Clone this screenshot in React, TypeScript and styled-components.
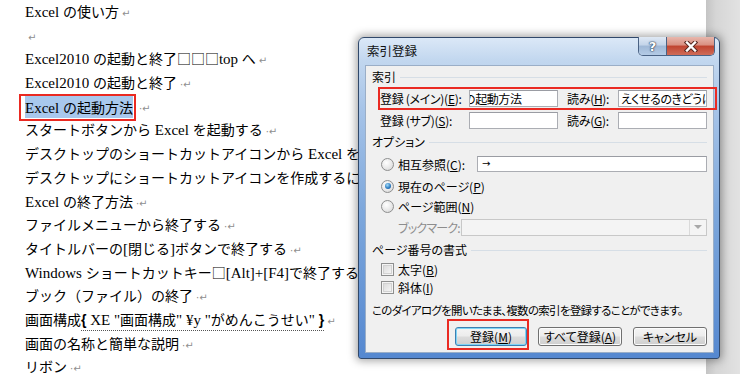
import styled, { createGlobalStyle } from "styled-components";

const GlobalStyle = createGlobalStyle`
  html, body {
    margin: 0;
    padding: 0;
    background: #fff;
  }
  body {
    width: 740px;
    height: 374px;
    overflow: hidden;
  }
`;

type DocItem = { key: string; text: string; space?: boolean; mark?: boolean };

const docLines: DocItem[] = [
  { key: "l1", text: "Excel の使い方", mark: true },
  { key: "l2", text: "", mark: true },
  { key: "l3", text: "Excel2010 の起動と終了□□□top へ", mark: true },
  { key: "l4", text: "Excel2010 の起動と終了", space: true, mark: true },
  { key: "l6", text: "スタートボタンから Excel を起動する", space: true, mark: true },
  { key: "l7", text: "デスクトップのショートカットアイコンから Excel を起動する" },
  { key: "l8", text: "デスクトップにショートカットアイコンを作成するには" },
  { key: "l9", text: "Excel の終了方法", space: true, mark: true },
  { key: "l10", text: "ファイルメニューから終了する", space: true, mark: true },
  { key: "l11", text: "タイトルバーの[閉じる]ボタンで終了する", space: true, mark: true },
  { key: "l12", text: "Windows ショートカットキー□[Alt]+[F4]で終了する" },
  { key: "l13", text: "ブック（ファイル）の終了", space: true, mark: true },
];

const tailLines: DocItem[] = [
  { key: "l15", text: "画面の名称と簡単な説明", space: true, mark: true },
  { key: "l16", text: "リボン", space: true, mark: true },
];

// latin runs are set a size up, like Century next to Mincho
const typeset = (text: string) =>
  text
    .split(/([\x20-\x7E¥]+)/)
    .filter(Boolean)
    .map((run, i) => (/^[\x20-\x7E¥]+$/.test(run) ? <Latin key={i}>{run}</Latin> : run));

const Mark = ({ space }: { space?: boolean }) => (
  <ParaMark>
    {space ? "·" : ""}↵
  </ParaMark>
);

const renderLine = (line: DocItem) => (
  <DocLine key={line.key}>
    {typeset(line.text)}
    {line.mark && <Mark space={line.space} />}
  </DocLine>
);

export default function App() {
  return (
    <>
      <GlobalStyle />
      <Screen>
        <DocPage>
          {docLines.slice(0, 4).map(renderLine)}
          <DocLine>
            <SelectFrame>
              <Selection>{typeset("Excel の起動方法")}</Selection>
            </SelectFrame>
            <Mark space />
          </DocLine>
          {docLines.slice(4).map(renderLine)}
          <DocLine>
            画面構成
            <FieldCode>
              <Brace>{"{"}</Brace>
              {typeset(' XE "画面構成" ¥y "がめんこうせい" ')}
              <Brace>{"}"}</Brace>
            </FieldCode>
            <Mark />
          </DocLine>
          {tailLines.map(renderLine)}
        </DocPage>
        <Gutter />

        <Dialog>
          <TitleBar>
            <TitleText>索引登録</TitleText>
            <CaptionButtons>
              <HelpButton>?</HelpButton>
              <CloseButton>
                <svg width="16" height="11" viewBox="0 0 16 11">
                  <path d="M4 1.5 L12 9.5 M12 1.5 L4 9.5" stroke="#5a2a22" strokeWidth="4.4" strokeLinecap="square" />
                  <path d="M4 1.5 L12 9.5 M12 1.5 L4 9.5" stroke="#fff" strokeWidth="2.4" strokeLinecap="square" />
                </svg>
              </CloseButton>
            </CaptionButtons>
          </TitleBar>

          <ClientWrap>
            <Client>
              <GroupHeader>索引</GroupHeader>
              <RedFrame>
                <EntryRow>
                  <FieldLabel>
                    登録 (メイン)(<u>E</u>):
                  </FieldLabel>
                  <TextBox>
                    <Scrolled>の起動方法</Scrolled>
                  </TextBox>
                  <FieldLabel $indent>
                    読み(<u>H</u>):
                  </FieldLabel>
                  <TextBox>えくせるのきどうほう</TextBox>
                </EntryRow>
              </RedFrame>
              <EntryRow $plain>
                <FieldLabel>
                  登録 (サブ)(<u>S</u>):
                </FieldLabel>
                <TextBox />
                <FieldLabel $indent>
                  読み(<u>G</u>):
                </FieldLabel>
                <TextBox />
              </EntryRow>

              <GroupHeader $mt={5}>オプション</GroupHeader>
              <OptionRow $mt={6}>
                <Radio />
                <OptionLabel>
                  相互参照(<u>C</u>):
                </OptionLabel>
                <WideBox>→</WideBox>
              </OptionRow>
              <OptionRow $mt={6}>
                <Radio $checked />
                <OptionLabel>
                  現在のページ(<u>P</u>)
                </OptionLabel>
              </OptionRow>
              <OptionRow $mt={4}>
                <Radio />
                <OptionLabel>
                  ページ範囲(<u>N</u>)
                </OptionLabel>
              </OptionRow>
              <BookmarkRow>
                <DisabledLabel>ブックマーク:</DisabledLabel>
                <Combo>
                  <ComboArrow />
                </Combo>
              </BookmarkRow>

              <GroupHeader $mt={7}>ページ番号の書式</GroupHeader>
              <OptionRow $mt={3}>
                <CheckBox />
                <OptionLabel>
                  太字(<u>B</u>)
                </OptionLabel>
              </OptionRow>
              <OptionRow $mt={2}>
                <CheckBox />
                <OptionLabel>
                  斜体(<u>I</u>)
                </OptionLabel>
              </OptionRow>

              <InfoText>このダイアログを開いたまま、複数の索引を登録することができます。</InfoText>

              <ButtonRow>
                <ButtonFrame>
                  <PushButton $w={72} $default>
                    登録(<u>M</u>)
                  </PushButton>
                </ButtonFrame>
                <PushButton $w={84}>
                  すべて登録(<u>A</u>)
                </PushButton>
                <PushButton $w={74}>キャンセル</PushButton>
              </ButtonRow>
            </Client>
          </ClientWrap>
        </Dialog>
      </Screen>
    </>
  );
}

const Screen = styled.div`
  position: relative;
  width: 740px;
  height: 374px;
  display: flex;
  overflow: hidden;
  background: #fff;
`;

const DocPage = styled.div`
  flex: 1;
  min-width: 0;
  padding-left: 25px;
  font-family: "Noto Sans CJK JP", "Liberation Serif", serif;
  font-size: 14px;
  color: #000;
  overflow: hidden;
`;

const DocLine = styled.div`
  height: 23.7px;
  line-height: 23.7px;
  white-space: nowrap;
`;

const Latin = styled.span`
  font-family: "Liberation Serif", serif;
  font-size: 15px;
`;

const ParaMark = styled.span`
  font-family: "DejaVu Sans", sans-serif;
  font-size: 10px;
  color: #8e8e8e;
  margin-left: 3px;
`;

const SelectFrame = styled.span`
  display: inline-block;
  vertical-align: top;
  margin: -1px 0 -2px -6px;
  padding: 0 1px 0 4px;
  border: 2px solid #ea2a22;
`;

const Selection = styled.span`
  display: inline-block;
  height: 22px;
  line-height: 22px;
  background: #a8c8ed;
`;

const FieldCode = styled.span`
  border-bottom: 1px dotted #555;
  padding-bottom: 1px;
`;

const Brace = styled.span`
  font-weight: bold;
  font-family: "Liberation Sans", sans-serif;
`;

const Gutter = styled.div`
  width: 34px;
  flex: none;
  background: linear-gradient(to right, #c4c4c4 0, #d6d6d6 30%, #e2e2e2 100%);
`;

const Dialog = styled.div`
  position: absolute;
  left: 358px;
  top: 37px;
  width: 362px;
  height: 322px;
  box-sizing: border-box;
  border: 1px solid #31496b;
  border-radius: 6px 6px 3px 3px;
  background: linear-gradient(
    180deg,
    #dbe8f7 0,
    #c2d7ef 22px,
    #a7c4e8 70px,
    #7ea8dc 170px,
    #5588d0 100%
  );
  box-shadow: 0 0 9px 2px rgba(0, 0, 0, 0.35);
  display: flex;
  flex-direction: column;
  font-family: "Noto Sans CJK JP", sans-serif;
  font-size: 12px;
  font-feature-settings: "palt";
  color: #000;
`;

const TitleBar = styled.div`
  height: 27px;
  flex: none;
  display: flex;
  justify-content: space-between;
  align-items: flex-start;
  padding: 0 4px 0 8px;
`;

const TitleText = styled.div`
  padding-top: 5px;
  line-height: 16px;
  font-size: 12.5px;
  color: #111;
`;

const CaptionButtons = styled.div`
  display: flex;
  margin-top: -1px;
  height: 19px;
  border: 1px solid #4a6284;
  border-top: none;
  border-radius: 0 0 5px 5px;
  overflow: hidden;
  box-sizing: border-box;
`;

const HelpButton = styled.div`
  width: 27px;
  display: flex;
  align-items: center;
  justify-content: center;
  border-right: 1px solid #4a6284;
  background: linear-gradient(180deg, #dfe8f4 0, #c3d4e9 45%, #9fb8d6 50%, #b4cbe6 100%);
  font-family: "DejaVu Sans", sans-serif;
  font-weight: bold;
  font-size: 13px;
  color: #fff;
  text-shadow: 0 0 1px #2c3f58, 0 0 1px #2c3f58, 0 0 2px #2c3f58;
`;

const CloseButton = styled.div`
  width: 47px;
  display: flex;
  align-items: center;
  justify-content: center;
  background: linear-gradient(180deg, #e8b7ad 0, #d98f80 45%, #c0432f 50%, #cf6c58 100%);
`;

const ClientWrap = styled.div`
  flex: 1;
  min-width: 0;
  padding: 0 5px 5px 6px;
  display: flex;
`;

const Client = styled.div`
  flex: 1;
  min-width: 0;
  box-sizing: border-box;
  border: 1px solid #9aaec7;
  background: #f0f0f0;
  padding: 3px 6px 0 6px;
  display: flex;
  flex-direction: column;
`;

const GroupHeader = styled.div<{ $mt?: number }>`
  height: 16px;
  line-height: 16px;
  margin-top: ${(p) => p.$mt ?? 0}px;
  display: flex;
  align-items: center;
  gap: 4px;
  white-space: nowrap;
  &::after {
    content: "";
    flex: 1;
    height: 1px;
    background: #d6dee6;
  }
`;

const RedFrame = styled.div`
  align-self: flex-start;
  margin: 2px 0 -3px 6px;
  padding: 1px 8px 1px 0;
  border: 2px solid #ea2a22;
`;

const EntryRow = styled.div<{ $plain?: boolean }>`
  display: grid;
  grid-template-columns: 89px 89px 60px 89px;
  align-items: center;
  height: 17px;
  margin: ${(p) => (p.$plain ? "5px 0 0 8px" : "0")};
`;

const FieldLabel = styled.span<{ $indent?: boolean }>`
  padding-left: ${(p) => (p.$indent ? 9 : 0)}px;
  white-space: nowrap;
  line-height: 17px;
  letter-spacing: -0.3px;
`;

const TextBox = styled.div`
  height: 17px;
  box-sizing: border-box;
  border: 1px solid #abadb3;
  border-top-color: #9a9ca3;
  background: #fff;
  padding: 0 2px;
  line-height: 15px;
  white-space: nowrap;
  overflow: hidden;
  letter-spacing: -0.4px;
`;

const Scrolled = styled.span`
  display: inline-block;
  margin-left: -8px;
`;

const OptionRow = styled.div<{ $mt?: number }>`
  height: 16px;
  margin-top: ${(p) => p.$mt ?? 0}px;
  padding-left: 9px;
  display: flex;
  align-items: center;
`;

const OptionLabel = styled.span`
  margin-left: 4px;
  white-space: nowrap;
`;

const Radio = styled.span<{ $checked?: boolean }>`
  flex: none;
  width: 13px;
  height: 13px;
  box-sizing: border-box;
  border-radius: 50%;
  border: 1px solid #8e8f8f;
  background: radial-gradient(circle at 40% 35%, #ffffff 0, #e6e6e6 60%, #cfcfcf 100%);
  display: flex;
  align-items: center;
  justify-content: center;
  &::after {
    content: "";
    display: ${(p) => (p.$checked ? "block" : "none")};
    width: 6px;
    height: 6px;
    border-radius: 50%;
    background: radial-gradient(circle at 40% 35%, #a7dcf7 0, #2f7fc4 55%, #174a87 100%);
  }
`;

const CheckBox = styled.span`
  flex: none;
  width: 13px;
  height: 13px;
  box-sizing: border-box;
  border: 1px solid #8e8f8f;
  box-shadow: inset 0 0 0 1px #f4f4f4, inset 0 0 0 2px #d2d2d2;
  background: linear-gradient(135deg, #d6d6d6, #fbfbfb);
`;

const WideBox = styled.div`
  flex: none;
  margin-left: auto;
  width: 230px;
  height: 16px;
  box-sizing: border-box;
  border: 1px solid #abadb3;
  border-top-color: #9a9ca3;
  background: #fff;
  padding: 0 4px;
  line-height: 14px;
  font-family: "DejaVu Sans", sans-serif;
  font-size: 10px;
`;

const BookmarkRow = styled.div`
  height: 16px;
  margin-top: 5px;
  padding-left: 26px;
  display: flex;
  align-items: center;
`;

const DisabledLabel = styled.span`
  color: #8d8d8d;
  white-space: nowrap;
  letter-spacing: -0.8px;
`;

const Combo = styled.div`
  flex: none;
  margin-left: auto;
  width: 246px;
  height: 17px;
  box-sizing: border-box;
  border: 1px solid #c8c8c8;
  background: #f4f4f4;
  display: flex;
  justify-content: flex-end;
`;

const ComboArrow = styled.div`
  width: 16px;
  border-left: 1px solid #dadada;
  display: flex;
  align-items: center;
  justify-content: center;
  &::after {
    content: "";
    border-left: 4px solid transparent;
    border-right: 4px solid transparent;
    border-top: 4px solid #a8a8a8;
  }
`;

const InfoText = styled.div`
  margin-top: 7px;
  height: 16px;
  line-height: 16px;
  white-space: nowrap;
  font-size: 11.5px;
  letter-spacing: -0.7px;
`;

const ButtonRow = styled.div`
  margin-top: 9px;
  display: flex;
  justify-content: flex-end;
  gap: 11px;
`;

const ButtonFrame = styled.div`
  margin: -8px -2px -4px -8px;
  padding: 6px 0 2px 6px;
  border: 2px solid #ea2a22;
  display: flex;
`;

const PushButton = styled.div<{ $w: number; $default?: boolean }>`
  width: ${(p) => p.$w}px;
  height: 19px;
  box-sizing: border-box;
  border: 1px solid ${(p) => (p.$default ? "#3c7fb1" : "#707070")};
  border-radius: 3px;
  background: linear-gradient(180deg, #f4f4f4 0, #ececec 48%, #dcdcdc 52%, #cfcfcf 100%);
  box-shadow: ${(p) => (p.$default ? "inset 0 0 0 1px #7fd4f6" : "inset 0 0 0 1px #fcfcfc")};
  display: flex;
  align-items: center;
  justify-content: center;
  line-height: 17px;
  white-space: nowrap;
`;
